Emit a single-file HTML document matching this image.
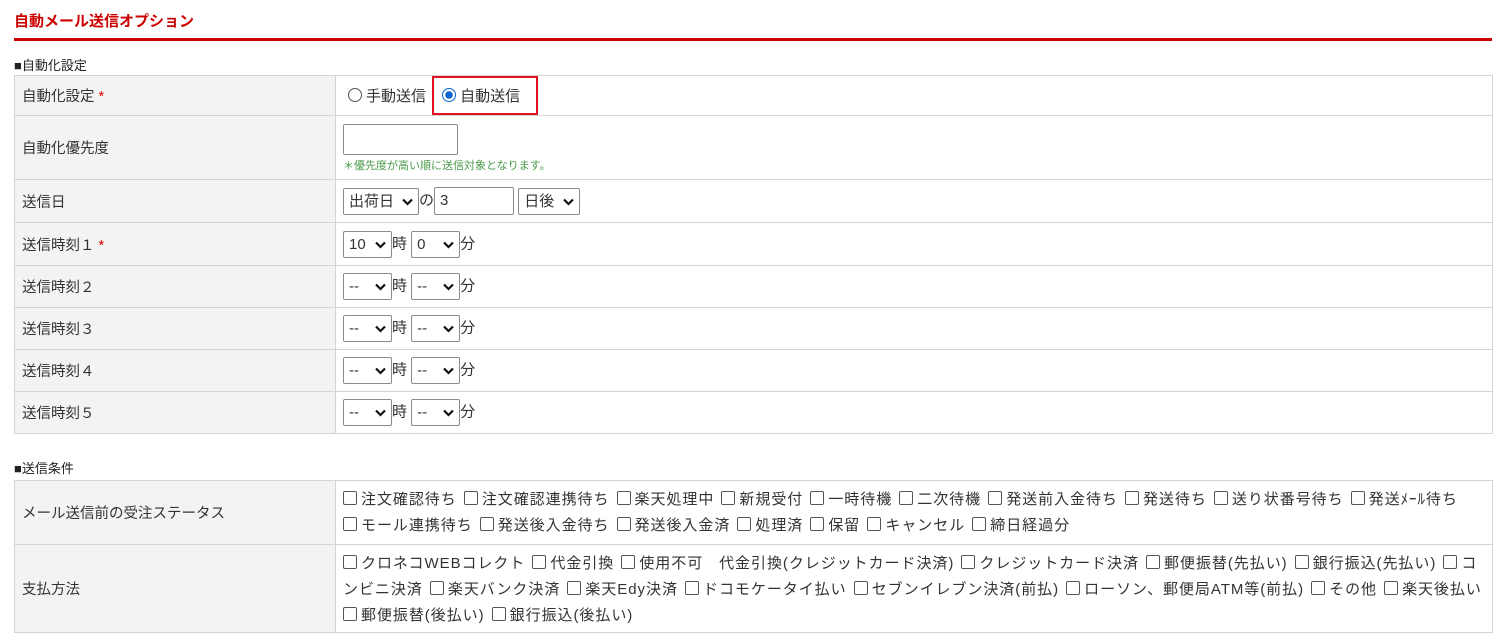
<!DOCTYPE html>
<html><head><meta charset="utf-8"><style>
body{margin:0;background:#fff;font-family:"Liberation Sans","Noto Sans CJK JP",sans-serif;font-size:14px;color:#333;width:1500px;height:633px;overflow:hidden;position:relative}
.title{position:absolute;left:14px;top:10px;color:#c00;font-size:15px;font-weight:bold}
.line{position:absolute;left:14px;top:38px;width:1478px;height:3px;background:#c00}
.sec{position:absolute;left:14px;font-size:13px;color:#222}
table{position:absolute;left:14px;width:1479px;border-collapse:collapse}
td{border:1px solid #d4d4d4;padding:0 7px;vertical-align:middle}
td.l{width:306px;background:#f3f3f3;font-size:14.5px}
td.r{padding-left:7px;font-size:15px}
.req{color:#d00}
.sel{display:inline-block;box-sizing:border-box;height:27px;border:1px solid #8a8a8a;border-radius:2px;vertical-align:middle;position:relative;padding:0 0 0 5px;line-height:25px;background:#fff}
.sel svg{position:absolute;right:5px;top:9px}
.inp{display:inline-block;box-sizing:border-box;height:28px;border:1px solid #8a8a8a;border-radius:2px;vertical-align:middle;padding-left:5px;line-height:26px}
.cb{display:inline-block;width:14px;height:14px;border:1px solid #555;border-radius:2px;box-sizing:border-box;vertical-align:-1px;margin-right:4px}
.rad{display:inline-block;width:14px;height:14px;border:1px solid #555;border-radius:50%;box-sizing:border-box;vertical-align:-1px;margin:0 4px 0 5px}
.rad.on{border-color:#0b63d6;background:radial-gradient(circle,#0b63d6 3.5px,#fff 4px)}
.cbx{line-height:26px;letter-spacing:0.95px;word-spacing:2px}
</style></head><body>
<div class="title">自動メール送信オプション</div>
<div class="line"></div>
<div class="sec" style="top:55px">■自動化設定</div>
<table style="top:75px">
<tr style="height:40px"><td class="l">自動化設定 <span class="req">*</span></td><td class="r"><span class="rad"></span>手動送信 <span style="display:inline-block;border:2px solid #e01020;padding:7px 16px 7px 3px;margin-left:2px"><span class="rad on"></span>自動送信</span></td></tr>
<tr style="height:64px"><td class="l">自動化優先度</td><td class="r"><span class="inp" style="width:115px;height:31px;margin-top:2px"></span><div style="font-size:11px;color:#4a9a4a;margin-top:2px">＊優先度が高い順に送信対象となります。</div></td></tr>
<tr style="height:43px"><td class="l">送信日</td><td class="r"><span class="sel" style="width:76px">出荷日<svg width="11" height="8"><path d="M1 1.5L5.5 6L10 1.5" stroke="#111" stroke-width="2.2" fill="none"/></svg></span>の<span class="inp" style="width:80px">3</span> <span class="sel" style="width:62px">日後<svg width="11" height="8"><path d="M1 1.5L5.5 6L10 1.5" stroke="#111" stroke-width="2.2" fill="none"/></svg></span></td></tr>
<tr style="height:43px"><td class="l">送信時刻１ <span class="req">*</span></td><td class="r"><span class="sel" style="width:49px">10<svg width="11" height="8"><path d="M1 1.5L5.5 6L10 1.5" stroke="#111" stroke-width="2.2" fill="none"/></svg></span>時 <span class="sel" style="width:49px">0<svg width="11" height="8"><path d="M1 1.5L5.5 6L10 1.5" stroke="#111" stroke-width="2.2" fill="none"/></svg></span>分</td></tr>
<tr style="height:42px"><td class="l">送信時刻２</td><td class="r"><span class="sel" style="width:49px">--<svg width="11" height="8"><path d="M1 1.5L5.5 6L10 1.5" stroke="#111" stroke-width="2.2" fill="none"/></svg></span>時 <span class="sel" style="width:49px">--<svg width="11" height="8"><path d="M1 1.5L5.5 6L10 1.5" stroke="#111" stroke-width="2.2" fill="none"/></svg></span>分</td></tr>
<tr style="height:42px"><td class="l">送信時刻３</td><td class="r"><span class="sel" style="width:49px">--<svg width="11" height="8"><path d="M1 1.5L5.5 6L10 1.5" stroke="#111" stroke-width="2.2" fill="none"/></svg></span>時 <span class="sel" style="width:49px">--<svg width="11" height="8"><path d="M1 1.5L5.5 6L10 1.5" stroke="#111" stroke-width="2.2" fill="none"/></svg></span>分</td></tr>
<tr style="height:42px"><td class="l">送信時刻４</td><td class="r"><span class="sel" style="width:49px">--<svg width="11" height="8"><path d="M1 1.5L5.5 6L10 1.5" stroke="#111" stroke-width="2.2" fill="none"/></svg></span>時 <span class="sel" style="width:49px">--<svg width="11" height="8"><path d="M1 1.5L5.5 6L10 1.5" stroke="#111" stroke-width="2.2" fill="none"/></svg></span>分</td></tr>
<tr style="height:42px"><td class="l">送信時刻５</td><td class="r"><span class="sel" style="width:49px">--<svg width="11" height="8"><path d="M1 1.5L5.5 6L10 1.5" stroke="#111" stroke-width="2.2" fill="none"/></svg></span>時 <span class="sel" style="width:49px">--<svg width="11" height="8"><path d="M1 1.5L5.5 6L10 1.5" stroke="#111" stroke-width="2.2" fill="none"/></svg></span>分</td></tr>
</table>
<div class="sec" style="top:458px">■送信条件</div>
<table style="top:480px">
<tr style="height:64px"><td class="l">メール送信前の受注ステータス</td><td class="r cbx"><span class="cb"></span>注文確認待ち <span class="cb"></span>注文確認連携待ち <span class="cb"></span>楽天処理中 <span class="cb"></span>新規受付 <span class="cb"></span>一時待機 <span class="cb"></span>二次待機 <span class="cb"></span>発送前入金待ち <span class="cb"></span>発送待ち <span class="cb"></span>送り状番号待ち <span class="cb"></span>発送ﾒｰﾙ待ち<br><span class="cb"></span>モール連携待ち <span class="cb"></span>発送後入金待ち <span class="cb"></span>発送後入金済 <span class="cb"></span>処理済 <span class="cb"></span>保留 <span class="cb"></span>キャンセル <span class="cb"></span>締日経過分</td></tr>
<tr style="height:88px"><td class="l">支払方法</td><td class="r cbx" style="padding-top:6px;vertical-align:top"><span class="cb"></span>クロネコWEBコレクト <span class="cb"></span>代金引換 <span class="cb"></span>使用不可　代金引換(クレジットカード決済) <span class="cb"></span>クレジットカード決済 <span class="cb"></span>郵便振替(先払い) <span class="cb"></span>銀行振込(先払い) <span class="cb"></span>コ<br>ンビニ決済 <span class="cb"></span>楽天バンク決済 <span class="cb"></span>楽天Edy決済 <span class="cb"></span>ドコモケータイ払い <span class="cb"></span>セブンイレブン決済(前払) <span class="cb"></span>ローソン、郵便局ATM等(前払) <span class="cb"></span>その他 <span class="cb"></span>楽天後払い<br><span class="cb"></span>郵便振替(後払い) <span class="cb"></span>銀行振込(後払い)</td></tr>
</table>
</body></html>
